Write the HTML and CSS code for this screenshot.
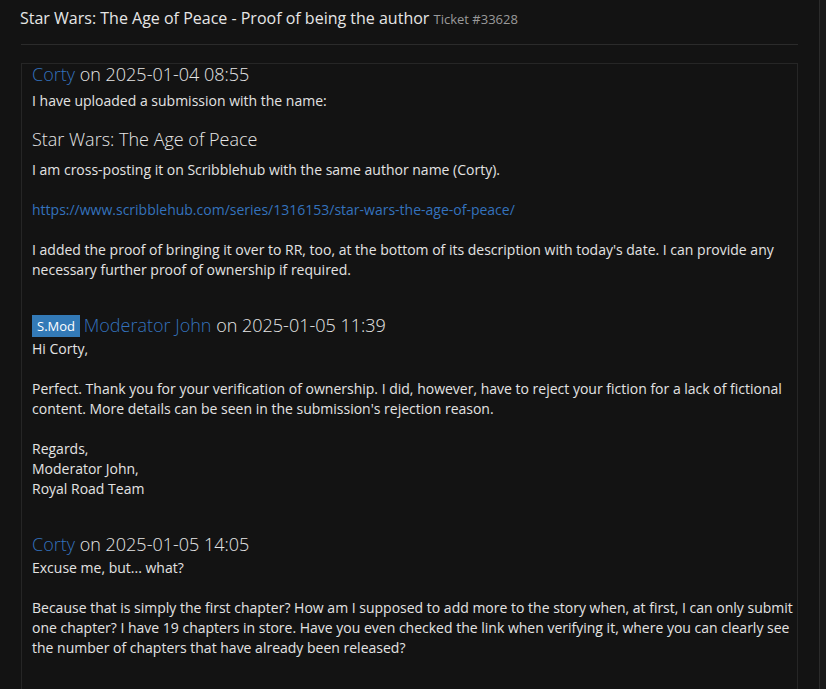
FILE: index.html
```html
<!DOCTYPE html>
<html>
<head>
<meta charset="utf-8">
<link rel="stylesheet" href="styles.css">
</head>
<body>
<div class="portlet">
  <h1 class="title">Star Wars: The Age of Peace - Proof of being the author <small class="ticket">Ticket #33628</small></h1>
  <hr class="divider">
  <div class="thread">
    <div class="message first">
      <h4 class="msg-head"><a class="user" href="#">Corty</a> on 2025-01-04 08:55</h4>
      <div class="msg-body">
        <p>I have uploaded a submission with the name:</p>
        <h4 class="fic-title">Star Wars: The Age of Peace</h4>
        <p>I am cross-posting it on Scribblehub with the same author name (Corty).<br><br><a class="link" href="#">https://www.scribblehub.com/series/1316153/star-wars-the-age-of-peace/</a><br><br>I added the proof of bringing it over to RR, too, at the bottom of its description with today's date. I can provide any necessary further proof of ownership if required.</p>
      </div>
    </div>
    <div class="message">
      <h4 class="msg-head"><span class="badge">S.Mod</span> <a class="user" href="#">Moderator John</a> on 2025-01-05 11:39</h4>
      <div class="msg-body">
        <p>Hi Corty,<br><br>Perfect. Thank you for your verification of ownership. I did, however, have to reject your fiction for a lack of fictional content. More details can be seen in the submission's rejection reason.<br><br>Regards,<br>Moderator John,<br>Royal Road Team</p>
      </div>
    </div>
    <div class="message">
      <h4 class="msg-head"><a class="user" href="#">Corty</a> on 2025-01-05 14:05</h4>
      <div class="msg-body">
        <p>Excuse me, but... what?<br><br>Because that is simply the first chapter? How am I supposed to add more to the story when, at first, I can only submit one chapter? I have 19 chapters in store. Have you even checked the link when verifying it, where you can clearly see the number of chapters that have already been released?</p>
      </div>
    </div>
  </div>
</div>
</body>
</html>
```

FILE: styles.css
```css
html, body {
  margin: 0;
  padding: 0;
  background: #1a1a1a;
  height: 100%;
  overflow: hidden;
}
body {
  font-family: "Open Sans", "Liberation Sans", sans-serif;
  font-size: 14px;
  line-height: 20px;
  color: #e3e3e3;
}
.portlet {
  box-sizing: border-box;
  width: 820px;
  min-height: 100%;
  background: #131313;
  border-right: 1px solid #2b2b2b;
  padding: 6px 21px 0 21px;
}
.title {
  margin: 0;
  font-size: 16px;
  font-weight: 400;
  line-height: 24px;
  color: #e6e6e6;
  margin-left: -1px;
}
.ticket {
  font-size: 13px;
  color: #9a9a9a;
}
.divider {
  border: 0;
  border-top: 1px solid #2b2b2b;
  margin: 13px 0 18px 0;
  height: 0;
}
.thread {
  border: 1px solid #262626;
  padding: 0 4px 60px 10px;
  min-height: 700px;
}
.message {
  margin-top: 35px;
}
.message.first {
  margin-top: 0;
}
.msg-head {
  margin: 0 0 4px 0;
  height: 20px;
  font-size: 18px;
  font-weight: 300;
  line-height: 20px;
  color: #e6e6e6;
  white-space: nowrap;
}
.message.first .msg-head {
  margin-bottom: 7px;
}
.user {
  color: #3472bd;
  text-decoration: none;
}
.badge {
  display: inline-block;
  background: #337ab7;
  color: #fff;
  font-size: 13px;
  font-weight: 400;
  line-height: 22px;
  padding: 0 5px;
  vertical-align: 1px;
  margin-right: -1px;
}
.msg-body p {
  margin: 0;
}
.fic-title {
  margin: 18px 0 11px 0;
  font-size: 18px;
  font-weight: 300;
  line-height: 20px;
  color: #e6e6e6;
}
.link {
  color: #3472bd;
  text-decoration: none;
}
```
